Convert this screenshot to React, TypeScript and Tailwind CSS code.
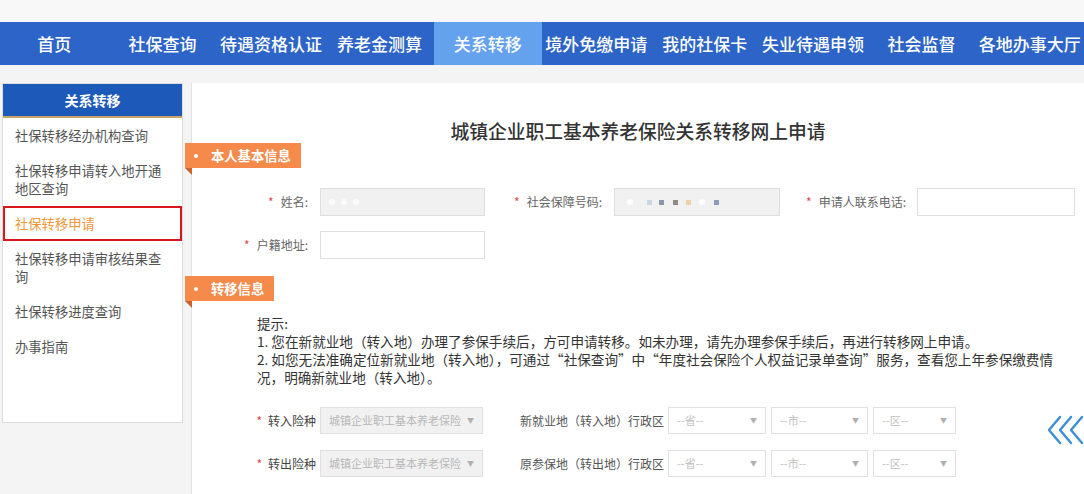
import React from "react";

const navItems = [
  "首页",
  "社保查询",
  "待遇资格认证",
  "养老金测算",
  "关系转移",
  "境外免缴申请",
  "我的社保卡",
  "失业待遇申领",
  "社会监督",
  "各地办事大厅",
];

const sideItems = [
  { t: "社保转移经办机构查询", active: false },
  { t: "社保转移申请转入地开通地区查询", active: false },
  { t: "社保转移申请", active: true },
  { t: "社保转移申请审核结果查询", active: false },
  { t: "社保转移进度查询", active: false },
  { t: "办事指南", active: false },
];

function Tag({ text }: { text: string }) {
  return (
    <div className="relative ml-[-7px] flex h-[25px] w-fit items-center bg-[#f58a4b] pl-[9px] pr-[10px] text-[13.3px] font-bold text-white">
      <span className="mr-[13px] inline-block h-[4px] w-[4px] rounded-full bg-white" />
      {text}
      <span className="absolute left-0 top-[25px] h-0 w-0 border-l-[7px] border-t-[7px] border-l-transparent border-t-[#c9632b]" />
    </div>
  );
}

function Label({ text, w }: { text: string; w: string }) {
  return (
    <div className={`${w} flex shrink-0 items-center justify-end text-[12px] text-[#666]`}>
      <span className="mr-[7px] text-[#e0464c]">*</span>
      <span>{text}:</span>
    </div>
  );
}

function Select({ w, text, gray = false }: { w: string; text: string; gray?: boolean }) {
  return (
    <div
      className={`${w} flex h-[27px] shrink-0 items-center justify-between border border-[#e0e0e0] pl-[8px] pr-[8px] text-[11px] ${
        gray ? "bg-[#f1f1f1] text-[#b8b8b8]" : "bg-white text-[#c0c0c0]"
      }`}
    >
      <span className="whitespace-nowrap">{text}</span>
      <span className="text-[7px] text-[#b0b0b0]">▼</span>
    </div>
  );
}

export default function App() {
  return (
    <div className="h-[494px] w-[1084px] overflow-hidden bg-[#f4f4f4] font-['Noto_Sans_CJK_SC','Liberation_Sans',sans-serif]">
      <div className="h-[22px] bg-[#f8f8f8]" />
      <nav className="flex h-[43px] bg-[#2d64c8]">
        {navItems.map((n) => (
          <div
            key={n}
            className={`flex flex-1 items-center justify-center whitespace-nowrap text-[17px] font-medium text-white ${
              n === "关系转移" ? "bg-[#64a2ee]" : ""
            }`}
          >
            {n}
          </div>
        ))}
      </nav>
      <div className="flex gap-[8px] pl-[2px] pt-[18px]">
        <aside className="h-[340px] w-[181px] shrink-0 border border-[#dcdcdc] bg-white">
          <div className="flex h-[34px] items-center justify-center border-b-2 border-[#c9a46a] bg-[#1d59b8] text-[14px] font-bold text-white">
            关系转移
          </div>
          {sideItems.map((s) =>
            s.active ? (
              <div
                key={s.t}
                className="border-2 border-[#d9161d] py-[6.5px] pl-[10px] pr-[14px] text-[13.3px] leading-[18px] text-[#f0983c]"
              >
                {s.t}
              </div>
            ) : (
              <div key={s.t} className="py-[8.5px] pl-[12px] pr-[14px] text-[13.3px] leading-[18px] text-[#555]">
                {s.t}
              </div>
            )
          )}
        </aside>
        <main className="relative h-[411px] flex-1 border-l border-[#e3e3e3] bg-white">
          <h1 className="pt-[36px] text-center text-[18.75px] font-medium leading-[24px] text-[#333]">
            城镇企业职工基本养老保险关系转移网上申请
          </h1>
          <Tag text="本人基本信息" />
          <div className="mt-[20px] flex h-[28px] items-stretch">
            <Label text="姓名" w="w-[116px]" />
            <div className="ml-[12px] flex w-[165px] shrink-0 items-center gap-[6px] border border-[#dedede] bg-[#f1f1f1] pl-[8px]">
              <span className="h-[6px] w-[6px] rounded-full bg-[#fbfbfb] blur-[0.5px]" />
              <span className="h-[6px] w-[6px] rounded-full bg-[#fbfbfb] blur-[0.5px]" />
              <span className="h-[6px] w-[6px] rounded-full bg-[#fbfbfb] blur-[0.5px]" />
            </div>
            <Label text="社会保障号码" w="w-[117px]" />
            <div className="ml-[12px] flex w-[166px] shrink-0 items-center border border-[#dedede] bg-[#f1f1f1] pl-[12px]">
              <span className="h-[6px] w-[6px] rounded-full bg-[#fcfcfc] blur-[0.5px]" />
              <span className="ml-[14px] h-[5px] w-[5px] bg-[#c9d7e6] blur-[0.5px]" />
              <span className="ml-[7px] h-[5px] w-[5px] bg-[#8d97ab] blur-[0.5px]" />
              <span className="ml-[9px] h-[5px] w-[5px] bg-[#8f8a86] blur-[0.5px]" />
              <span className="ml-[8px] h-[5px] w-[5px] bg-[#efcfa6] blur-[0.5px]" />
              <span className="ml-[8px] h-[6px] w-[6px] rounded-full bg-[#fcfcfc] blur-[0.5px]" />
              <span className="ml-[9px] h-[5px] w-[5px] bg-[#8d9bbd] blur-[0.5px]" />
            </div>
            <Label text="申请人联系电话" w="w-[126px]" />
            <div className="ml-[11px] w-[158px] shrink-0 border border-[#dedede] bg-white" />
          </div>
          <div className="mt-[15px] flex h-[28px] items-stretch">
            <Label text="户籍地址" w="w-[116px]" />
            <div className="ml-[12px] w-[165px] shrink-0 border border-[#dedede] bg-white" />
          </div>
          <div className="mt-[17px]">
            <Tag text="转移信息" />
          </div>
          <div className="mt-[13px] pl-[65px] text-[13.6px] leading-[18px] text-[#333]">
            <div className="whitespace-nowrap">提示:</div>
            <div className="whitespace-nowrap">
              1. 您在新就业地（转入地）办理了参保手续后，方可申请转移。如未办理，请先办理参保手续后，再进行转移网上申请。
            </div>
            <div className="whitespace-nowrap">
              2. 如您无法准确定位新就业地（转入地），可通过“社保查询”中“年度社会保险个人权益记录单查询”服务，查看您上年参保缴费情
            </div>
            <div className="whitespace-nowrap">况，明确新就业地（转入地）。</div>
          </div>
          <div className="mt-[21px] flex h-[27px] items-stretch">
            <div className="flex w-[124px] shrink-0 items-center justify-end text-[12px] text-[#444]">
              <span className="mr-[6px] text-[#e0464c]">*</span>转入险种
            </div>
            <div className="ml-[4px]">
              <Select w="w-[163px]" text="城镇企业职工基本养老保险" gray />
            </div>
            <div className="ml-[37px] flex w-[144px] shrink-0 items-center whitespace-nowrap text-[12px] text-[#555]">
              新就业地（转入地）行政区
            </div>
            <div className="ml-[4px] flex gap-[5px]">
              <Select w="w-[98px]" text="--省--" />
              <Select w="w-[97px]" text="--市--" />
              <Select w="w-[83px]" text="--区--" />
            </div>
          </div>
          <div className="mt-[16px] flex h-[27px] items-stretch">
            <div className="flex w-[124px] shrink-0 items-center justify-end text-[12px] text-[#444]">
              <span className="mr-[6px] text-[#e0464c]">*</span>转出险种
            </div>
            <div className="ml-[4px]">
              <Select w="w-[163px]" text="城镇企业职工基本养老保险" gray />
            </div>
            <div className="ml-[37px] flex w-[144px] shrink-0 items-center whitespace-nowrap text-[12px] text-[#555]">
              原参保地（转出地）行政区
            </div>
            <div className="ml-[4px] flex gap-[5px]">
              <Select w="w-[98px]" text="--省--" />
              <Select w="w-[97px]" text="--市--" />
              <Select w="w-[83px]" text="--区--" />
            </div>
          </div>
          <svg
            className="absolute right-0 top-[332px]"
            width="38"
            height="30"
            viewBox="0 0 38 30"
            fill="none"
            stroke="#3b8fd8"
            strokeWidth="2.4"
            strokeLinecap="round"
            strokeLinejoin="round"
          >
            <polyline points="14,2 3,15 14,28" />
            <polyline points="25,2 14,15 25,28" />
            <polyline points="36,2 25,15 36,28" />
          </svg>
        </main>
      </div>
    </div>
  );
}
